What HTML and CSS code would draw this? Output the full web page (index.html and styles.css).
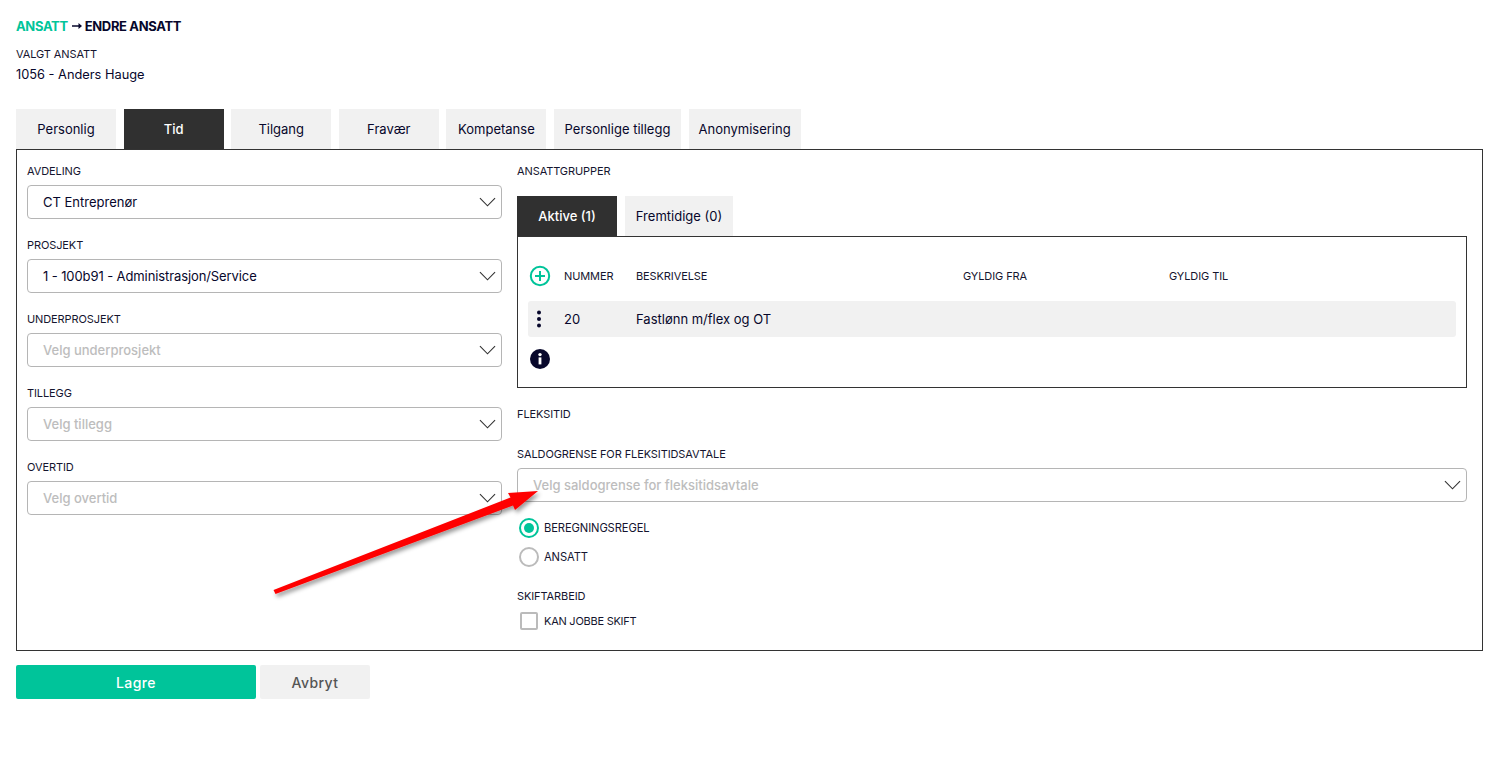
FILE: index.html
```html
<!DOCTYPE html>
<html lang="no">
<head>
<meta charset="utf-8">
<title>Endre ansatt</title>
<link rel="stylesheet" href="styles.css">
</head>
<body>
<main class="page">
  <h1 class="crumb"><span class="crumb-link">ANSATT</span><svg class="crumb-arrow" viewBox="0 0 10 8"><path d="M0 3.2h6.5V1L10 4 6.5 7V4.8H0z"/></svg><span>ENDRE ANSATT</span></h1>
  <div class="label selected-label">VALGT ANSATT</div>
  <div class="selected-value">1056 - Anders Hauge</div>

  <nav class="tabs">
    <div class="tab w100">Personlig</div>
    <div class="tab w100 active">Tid</div>
    <div class="tab w100">Tilgang</div>
    <div class="tab w100">Fravær</div>
    <div class="tab w100">Kompetanse</div>
    <div class="tab w127">Personlige tillegg</div>
    <div class="tab w112">Anonymisering</div>
  </nav>

  <section class="panel">
    <div class="left">
      <div class="field">
        <div class="label">AVDELING</div>
        <div class="select"><span>CT Entreprenør</span><svg class="chev" viewBox="0 0 18 10"><path d="M1 1l8 8 8-8"/></svg></div>
      </div>
      <div class="field">
        <div class="label">PROSJEKT</div>
        <div class="select"><span class="tight">1 - 100b91 - Administrasjon/Service</span><svg class="chev" viewBox="0 0 18 10"><path d="M1 1l8 8 8-8"/></svg></div>
      </div>
      <div class="field">
        <div class="label">UNDERPROSJEKT</div>
        <div class="select ph"><span>Velg underprosjekt</span><svg class="chev" viewBox="0 0 18 10"><path d="M1 1l8 8 8-8"/></svg></div>
      </div>
      <div class="field">
        <div class="label">TILLEGG</div>
        <div class="select ph"><span>Velg tillegg</span><svg class="chev" viewBox="0 0 18 10"><path d="M1 1l8 8 8-8"/></svg></div>
      </div>
      <div class="field">
        <div class="label">OVERTID</div>
        <div class="select ph"><span>Velg overtid</span><svg class="chev" viewBox="0 0 18 10"><path d="M1 1l8 8 8-8"/></svg></div>
      </div>
    </div>

    <div class="right">
      <div class="label group-title">ANSATTGRUPPER</div>
      <div class="subtabs">
        <div class="tab w100 active">Aktive (1)</div>
        <div class="tab subtab2">Fremtidige (0)</div>
      </div>
      <div class="groupbox">
        <div class="grow ghead">
          <div class="gicon"><svg class="ic" viewBox="0 0 22 22"><circle cx="11" cy="11" r="9.2" fill="none" stroke="#00c49a" stroke-width="2"/><path d="M11 6v10M6 11h10" stroke="#00c49a" stroke-width="2"/></svg></div>
          <div class="gnum label">NUMMER</div>
          <div class="gdesc label">BESKRIVELSE</div>
          <div class="gfrom label">GYLDIG FRA</div>
          <div class="gto label">GYLDIG TIL</div>
        </div>
        <div class="grow gdata">
          <div class="gicon"><svg class="dots" viewBox="0 0 6 18"><circle cx="3" cy="2.5" r="2"/><circle cx="3" cy="9" r="2"/><circle cx="3" cy="15.5" r="2"/></svg></div>
          <div class="gnum">20</div>
          <div class="gdesc">Fastlønn m/flex og OT</div>
        </div>
        <div class="ginfo"><svg class="ic" viewBox="0 0 22 22"><circle cx="11" cy="11" r="10" fill="#07072b"/><rect x="9.6" y="9.4" width="2.8" height="7" fill="#fff"/><circle cx="11" cy="6.6" r="1.7" fill="#fff"/></svg></div>
      </div>

      <div class="label flex-title">FLEKSITID</div>
      <div class="label limit-title">SALDOGRENSE FOR FLEKSITIDSAVTALE</div>
      <div class="select ph"><span>Velg saldogrense for fleksitidsavtale</span><svg class="chev" viewBox="0 0 18 10"><path d="M1 1l8 8 8-8"/></svg></div>

      <div class="radios">
        <div class="radio-row"><span class="radio on"></span><span class="label">BEREGNINGSREGEL</span></div>
        <div class="radio-row"><span class="radio"></span><span class="label">ANSATT</span></div>
      </div>
      <div class="label shift-title">SKIFTARBEID</div>
      <div class="check-row"><span class="check"></span><span class="label">KAN JOBBE SKIFT</span></div>
    </div>
  </section>

  <div class="actions">
    <button class="btn primary">Lagre</button>
    <button class="btn secondary">Avbryt</button>
  </div>
</main>

<svg class="annot" viewBox="0 0 1499 769" width="1499" height="769">
  <defs><filter id="sh" x="-10%" y="-20%" width="120%" height="150%"><feDropShadow dx="2" dy="3" stdDeviation="2" flood-color="#000" flood-opacity=".4"/></filter></defs>
  <path filter="url(#sh)" fill="#fe0000" d="M273.5 590L510.5 497.5 508 493 538 491 515 510 513 505.5 275.5 594z"/>
</svg>
</body>
</html>
```
FILE: styles.css
```css
* { box-sizing: border-box; }
html, body { margin: 0; padding: 0; background: #fff; }
body {
  font-family: Inter, "Liberation Sans", sans-serif;
  color: #07072b;
  font-size: 13px;
  width: 1499px;
  height: 769px;
  overflow: hidden;
  position: relative;
}
.page { padding: 18px 16px 0; }
.crumb { margin: 0; font-size: 13px; line-height: 16px; font-weight: 700; letter-spacing: -.35px; display: flex; align-items: center; }
.crumb-link { color: #00c49a; }
.crumb-arrow { width: 10px; height: 8px; margin: 0 3px 0 4px; fill: #07072b; }
.label { font-size: 11px; line-height: 14px; letter-spacing: -.1px; color: #15152f; }
.selected-label { margin-top: 13px; }
.selected-value { margin-top: 5px; line-height: 18px; font-size: 12.8px; }

.tabs { display: flex; gap: 7.6px; margin-top: 25px; height: 40px; }
.tab {
  display: flex; align-items: center; justify-content: center;
  background: #f1f1f1; height: 40px; font-size: 13px; white-space: nowrap;
}
.w100 { width: 100px; }
.w127 { width: 127px; }
.w112 { width: 112px; }
.tab.active { background: #303030; color: #fff; font-weight: 500; }

.panel {
  border: 1px solid #333; height: 502px;
  padding: 14px 15px 0 10px;
  display: flex; gap: 15px;
}
.left { width: 475px; flex: none; }
.right { flex: 1; min-width: 0; }
.field { height: 74px; }
.field .label { height: 14px; }
.select {
  margin-top: 7px; height: 34px; border: 1px solid #b5b5b5; border-radius: 4px;
  display: flex; align-items: center; justify-content: space-between;
  padding: 0 5px 0 15px; font-size: 13px; background: #fff;
}
.tight { letter-spacing: -.1px; }
.select.ph { color: #bdbdbd; font-weight: 500; }
.chev { width: 17px; height: 10px; fill: none; stroke: #333; stroke-width: 1.2; }

.subtabs { display: flex; gap: 8px; margin-top: 18px; }
.subtab2 { width: 108px; }
.groupbox { border: 1px solid #333; height: 152px; padding: 0 10px; }
.grow { display: flex; align-items: center; height: 36px; }
.ghead { margin-top: 21px; }
.gdata { margin-top: 7px; background: #f1f1f1; border-radius: 3px; font-size: 13px; }
.gicon { width: 36px; padding-left: 1px; display: flex; align-items: center; }
.ic { width: 22px; height: 22px; display: block; }
.dots { width: 6px; height: 18px; margin-left: 7px; fill: #07072b; }
.gnum { width: 72px; }
.gdesc { width: 327px; }
.gfrom { width: 206px; }
.ginfo { margin-top: 11px; padding-left: 1px; }

.flex-title { margin-top: 19px; }
.limit-title { margin-top: 26px; }
.limit-title + .select { margin-top: 7px; }
.radios { margin-top: 11px; }
.radio-row { display: flex; align-items: center; gap: 5px; height: 29px; padding-left: 2px; }
.radio-row .label { font-size: 11.2px; }
.radio { width: 20px; height: 20px; border-radius: 50%; border: 2px solid #bbb; background: #fff; flex: none; }
.radio.on { border-color: #00c49a; position: relative; }
.radio.on::after { content: ""; position: absolute; inset: 3px; border-radius: 50%; background: #00c49a; }
.shift-title { margin-top: 18px; }
.check-row { display: flex; align-items: center; gap: 6px; margin-top: 9px; padding-left: 3px; height: 18px; }
.check-row .label { letter-spacing: -.25px; }
.check { width: 18px; height: 18px; border: 2px solid #bbb; border-radius: 2px; flex: none; }

.actions { display: flex; gap: 4px; margin-top: 14px; }
.btn { height: 34px; border: 0; border-radius: 2px; font-family: inherit; font-size: 14px; font-weight: 500; letter-spacing: .4px; }
.primary { width: 240px; background: #00c49a; color: #fff; }
.secondary { width: 110px; background: #f1f1f1; color: #555; }

.annot { position: absolute; left: 0; top: 0; pointer-events: none; }
```
